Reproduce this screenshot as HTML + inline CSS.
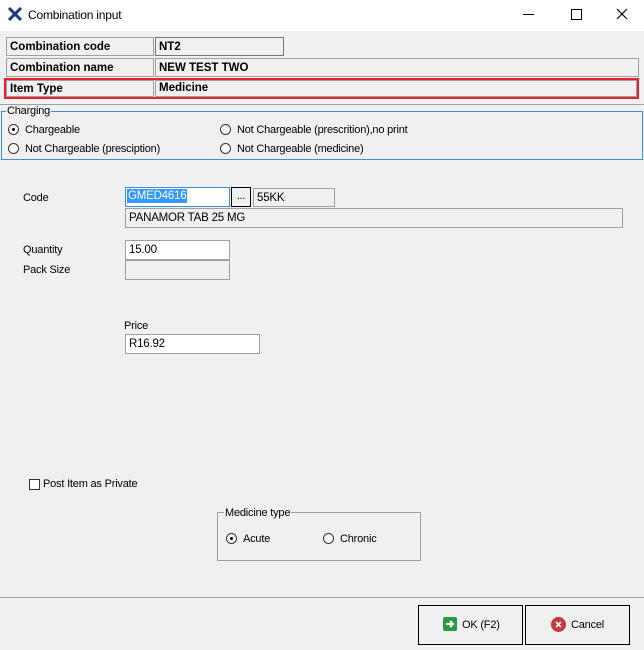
<html><head><style>
body{margin:0;width:644px;height:650px;background:#f0f0f0;font-family:"Liberation Sans",sans-serif;font-size:11px;color:#000;position:relative;overflow:hidden;letter-spacing:-0.2px}
.a{position:absolute}
.tb{left:0;top:0;width:644px;height:31px;background:#fff}
.lb{border:1px solid #a0a0a0;box-sizing:border-box;font-weight:bold;font-size:11.5px;padding:3px 0 0 3px;height:19px;letter-spacing:0}
.inp{border:1px solid #a0a0a0;box-sizing:border-box;height:20px;padding:3px 0 0 3px;font-size:11.5px}
.w{background:#fff}
.r{width:11px;height:11px;border:1px solid #333;border-radius:50%;box-sizing:border-box;background:#fff}
.dot{position:absolute;left:3px;top:3px;width:3px;height:3px;border-radius:50%;background:#000}
</style></head><body>
<div class="a tb"></div>
<svg class="a" style="left:8px;top:7px" width="14" height="14"><path d="M1 1 L13 13 M13 1 L1 13" stroke="#1a3a8a" stroke-width="3"/></svg>
<div class="a" style="left:28px;top:8px;font-size:12px">Combination input</div>
<div class="a" style="left:523px;top:14px;width:11px;height:1px;background:#000"></div>
<div class="a" style="left:571px;top:9px;width:9px;height:9px;border:1px solid #000"></div>
<svg class="a" style="left:616px;top:8px" width="12" height="12"><path d="M1 1L11 11M11 1L1 11" stroke="#000" stroke-width="1.2"/></svg>

<div class="a lb" style="left:6px;top:37px;width:148px">Combination code</div>
<div class="a lb" style="left:155px;top:37px;width:129px;border-color:#777">NT2</div>
<div class="a lb" style="left:6px;top:58px;width:148px">Combination name</div>
<div class="a lb" style="left:155px;top:58px;width:484px">NEW TEST TWO</div>
<div class="a" style="left:4px;top:78px;width:635px;height:21px;border:2px solid #e8202a;box-sizing:border-box"></div>
<div class="a lb" style="left:6px;top:80px;width:148px;height:17px;padding-top:2px">Item Type</div>
<div class="a lb" style="left:155px;top:80px;width:482px;height:17px;padding-top:1px">Medicine</div>
<div class="a" style="left:0;top:104px;width:644px;height:1px;background:#a0a0a0"></div>

<div class="a" style="left:1px;top:111px;width:642px;height:49px;border:1px solid #3c8fd8;box-sizing:border-box"></div>
<div class="a" style="left:6px;top:105px;background:#f0f0f0;padding:0 1px">Charging</div>
<div class="a r" style="left:8px;top:124px"><div class="dot"></div></div><div class="a" style="left:25px;top:124px">Chargeable</div>
<div class="a r" style="left:8px;top:143px"></div><div class="a" style="left:25px;top:143px">Not Chargeable (presciption)</div>
<div class="a r" style="left:220px;top:124px"></div><div class="a" style="left:237px;top:124px">Not Chargeable (prescrition),no print</div>
<div class="a r" style="left:220px;top:143px"></div><div class="a" style="left:237px;top:143px">Not Chargeable (medicine)</div>

<div class="a" style="left:23px;top:192px">Code</div>
<div class="a inp w" style="left:125px;top:187px;width:105px;border-color:#3c8fd8;padding:2px 0 0 1px"><span style="background:#3399ff;color:#fff;padding:1px 1px">GMED4616</span></div>
<div class="a" style="left:231px;top:187px;width:20px;height:20px;border:1px solid #000;box-sizing:border-box;text-align:center;line-height:16px">...</div>
<div class="a inp" style="left:253px;top:188px;width:82px;height:19px">55KK</div>
<div class="a inp" style="left:125px;top:208px;width:498px">PANAMOR TAB 25 MG</div>
<div class="a" style="left:23px;top:244px">Quantity</div>
<div class="a inp w" style="left:125px;top:240px;width:105px">15.00</div>
<div class="a" style="left:23px;top:264px">Pack Size</div>
<div class="a inp" style="left:125px;top:260px;width:105px"></div>
<div class="a" style="left:124px;top:320px">Price</div>
<div class="a inp w" style="left:125px;top:334px;width:135px">R16.92</div>

<div class="a" style="left:29px;top:479px;width:11px;height:11px;border:1px solid #333;box-sizing:border-box;background:#fff"></div>
<div class="a" style="left:43px;top:478px">Post Item as Private</div>

<div class="a" style="left:217px;top:512px;width:204px;height:49px;border:1px solid #a0a0a0;box-sizing:border-box"></div>
<div class="a" style="left:224px;top:507px;background:#f0f0f0;padding:0 1px">Medicine type</div>
<div class="a r" style="left:226px;top:533px"><div class="dot"></div></div><div class="a" style="left:243px;top:533px">Acute</div>
<div class="a r" style="left:323px;top:533px"></div><div class="a" style="left:340px;top:533px">Chronic</div>

<div class="a" style="left:0;top:597px;width:644px;height:1px;background:#a0a0a0"></div>
<div class="a" style="left:418px;top:605px;width:105px;height:40px;border:1px solid #000;box-sizing:border-box"></div>
<div class="a" style="left:443px;top:617px;width:14px;height:14px;background:#2a9a3a;border-radius:2px"></div>
<svg class="a" style="left:443px;top:617px" width="14" height="14"><path d="M3 7H10M7 4L10 7L7 10" stroke="#fff" stroke-width="2" fill="none"/></svg>
<div class="a" style="left:462px;top:619px">OK (F2)</div>
<div class="a" style="left:525px;top:605px;width:105px;height:40px;border:1px solid #000;box-sizing:border-box"></div>
<div class="a" style="left:551px;top:617px;width:15px;height:15px;background:#c8383c;border-radius:50%"></div>
<svg class="a" style="left:551px;top:617px" width="15" height="15"><path d="M5 5L10 10M10 5L5 10" stroke="#fff" stroke-width="1.6"/></svg>
<div class="a" style="left:571px;top:619px">Cancel</div>
</body></html>
